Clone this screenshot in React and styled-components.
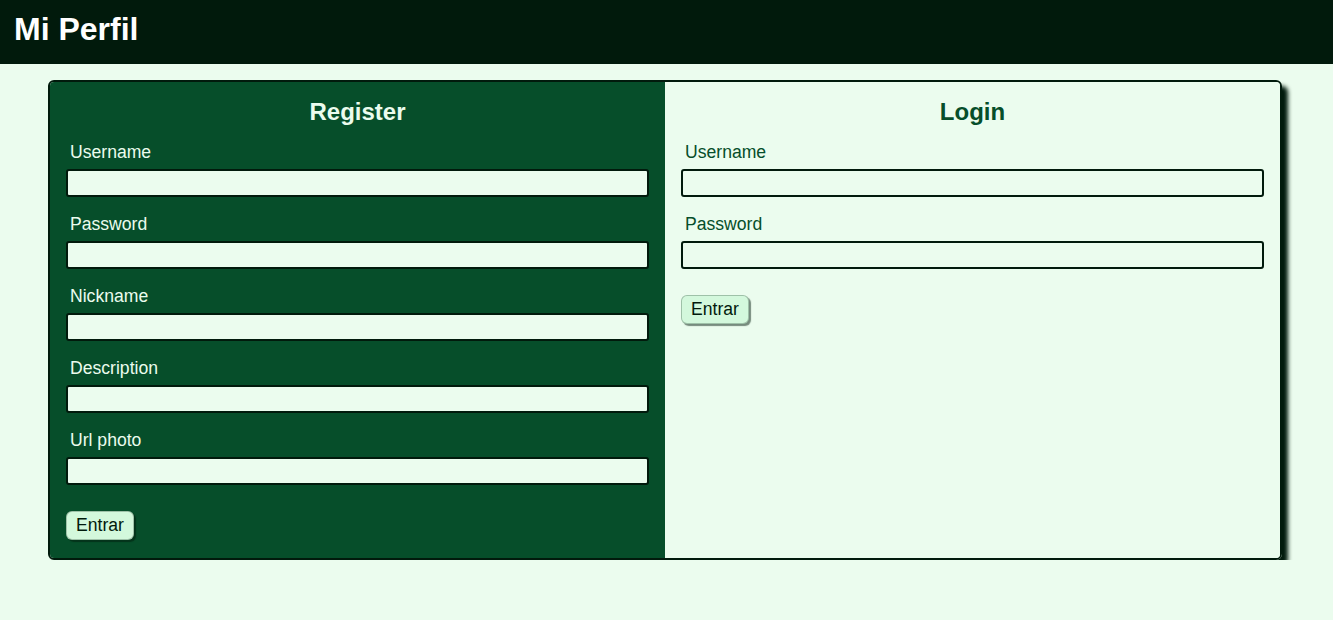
import React from 'react';
import styled, { createGlobalStyle } from 'styled-components';

const GlobalStyle = createGlobalStyle`
    body {
        margin : 0;
        background-color : #ebfcee;
        font-family : "Liberation Sans", Arial, sans-serif;
    }
`

const registerFields = ['Username', 'Password', 'Nickname', 'Description', 'Url photo'];
const loginFields = ['Username', 'Password'];

function FormPanel(props) {
    return (
        <Panel dark={props.dark}>
            <Title dark={props.dark}>{props.title}</Title>
            {props.fields.map((f) => (
                <Field key={f}>
                    <Label dark={props.dark}>{f}</Label>
                    <Input type={f === 'Password' ? 'password' : 'text'} />
                </Field>
            ))}
            <Button>Entrar</Button>
        </Panel>
    )
}

function App() {
    return (
        <>
            <GlobalStyle />
            <Header>
                <h1>Mi Perfil</h1>
            </Header>
            <Card>
                <FormPanel dark title="Register" fields={registerFields} />
                <FormPanel title="Login" fields={loginFields} />
            </Card>
        </>
    )
}

export default App;


const Header = styled.header`
    height : 64px;
    background-color : #011a0c;
    display : flex;
    align-items : center;
    padding : 0 14px;

    h1 {
        margin : 0;
        color : white;
        font-size : 32px;
        font-weight : 700;
        padding-bottom : 6px;
    }
`

const Card = styled.main`
    width : 1234px;
    margin : 16px 0 0 48px;
    box-sizing : border-box;
    border : 2px solid #011a0c;
    border-radius : 6px;
    overflow : hidden;
    display : grid;
    grid-template-columns : 615px 1fr;
    box-shadow : 6px 6px 4px #011a0c;
`

const Panel = styled.section`
    background-color : ${props => props.dark ? '#064e2a' : '#ebfcee'};
    padding : 15px 16px 18px 16px;
    display : flex;
    flex-direction : column;
    align-items : flex-start;
`

const Title = styled.h2`
    margin : 0 0 14px;
    width : 100%;
    text-align : center;
    font-size : 24px;
    line-height : 30px;
    color : ${props => props.dark ? '#ebfcee' : '#064e2a'};
`

const Field = styled.div`
    width : 100%;
    display : flex;
    flex-direction : column;
    margin-bottom : 16px;
`

const Label = styled.label`
    font-size : 17.6px;
    line-height : 20px;
    padding : 1px 0 0 4px;
    margin-bottom : 7px;
    color : ${props => props.dark ? '#ebfcee' : '#064e2a'};
`

const Input = styled.input`
    height : 28px;
    box-sizing : border-box;
    width : 100%;
    background-color : #ebfcee;
    border : 2px solid #011a0c;
    border-radius : 3px;
    outline : none;
`

const Button = styled.button`
    margin-top : 10px;
    height : 29px;
    padding : 0 9px;
    font-family : inherit;
    font-size : 17.6px;
    color : #011a0c;
    background-color : #d3f8dc;
    border : 1px solid rgba(1,26,12,0.25);
    border-radius : 6px;
    box-shadow : 2px 2px 1px rgba(1,26,12,0.5);
    cursor : pointer;
`
